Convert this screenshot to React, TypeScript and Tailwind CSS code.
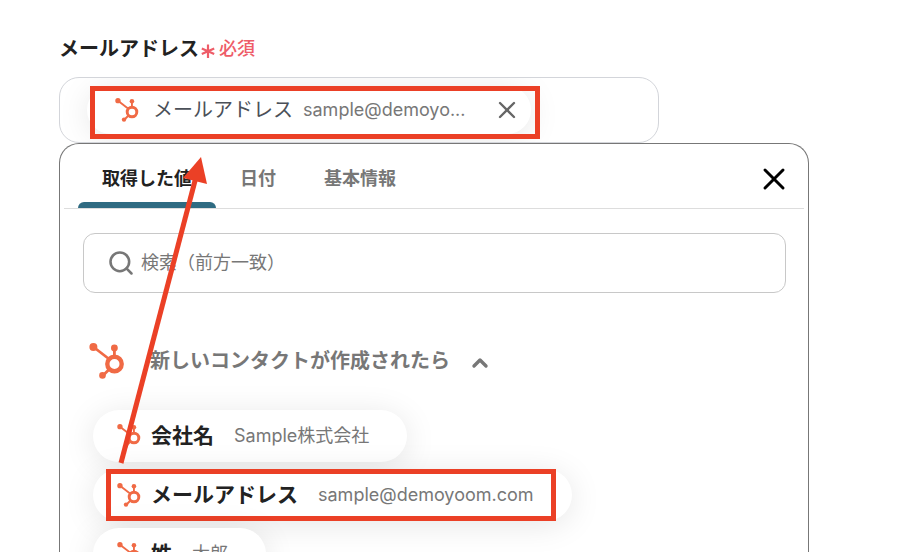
import { useState } from "react";
import { ChevronUp, Search, X } from "lucide-react";

type OutputItem = {
  name: string;
  sample: string;
  highlighted?: boolean;
};

const TABS = ["取得した値", "日付", "基本情報"];

const ITEMS: OutputItem[] = [
  { name: "会社名", sample: "Sample株式会社" },
  { name: "メールアドレス", sample: "sample@demoyoom.com", highlighted: true },
  { name: "姓", sample: "太郎" },
];

function HubSpotIcon({ className }: { className: string }) {
  return (
    <svg viewBox="0 0 36 36" className={className} aria-hidden="true">
      <g stroke="#f06a45" strokeWidth="2.8" fill="none">
        <path d="M4.5 4 20 16" />
        <path d="M25.4 5v10" />
        <path d="M13.5 33 21 25.5" />
        <circle cx="25.5" cy="21" r="7.2" strokeWidth="4.4" />
      </g>
      <g fill="#f06a45">
        <circle cx="4.4" cy="4" r="4" />
        <circle cx="25.4" cy="5" r="3.4" />
        <circle cx="13.5" cy="32.4" r="3.3" />
      </g>
    </svg>
  );
}

function RequiredMark() {
  return (
    <svg viewBox="0 0 14 14" className="mt-1 h-3.5 w-3.5" aria-hidden="true">
      <path
        d="M7 .6v13.4M.8 4.6l12.4 5.4M13.2 4.6.8 10"
        stroke="#ee5c68"
        strokeWidth="2.2"
      />
    </svg>
  );
}

function OutputPill({ item }: { item: OutputItem }) {
  return (
    <li className="relative flex w-fit">
      <button
        type="button"
        className="flex h-13 items-center rounded-full bg-white pr-[38px] pl-6 shadow-[0_4px_32px_rgba(0,0,0,0.1)]"
      >
        <HubSpotIcon className="mr-2.5 h-6 w-6" />
        <span className="mr-5 text-[21px] font-bold text-[#222]">
          {item.name}
        </span>
        <span className="text-lg text-[#777]">{item.sample}</span>
      </button>
      {item.highlighted && (
        <span className="absolute inset-y-0 right-4 left-[13px] border-5 border-[#eb4026]" />
      )}
    </li>
  );
}

export default function App() {
  const [activeTab, setActiveTab] = useState(TABS[0]);
  const [keyword, setKeyword] = useState("");

  return (
    <main className="relative flex h-screen flex-col overflow-hidden bg-white pr-[99px] pl-[59px] font-['Inter','Noto_Sans_CJK_JP',sans-serif]">
      <div className="flex h-[77px] shrink-0 items-center pt-5">
        <label htmlFor="mail-output" className="text-xl font-bold text-[#222]">
          メールアドレス
        </label>
        <span className="ml-0.5 flex items-center gap-1 text-lg font-medium text-[#ee5c68]">
          <RequiredMark />
          必須
        </span>
      </div>

      <div className="relative mr-[150px] flex h-[66px] shrink-0">
        <div className="flex flex-1 items-center overflow-hidden rounded-[20px] border border-[#d3d5da] pl-[27px]">
          <div className="flex h-12 items-center rounded-full bg-white pr-2.5 pl-7 shadow-[0_4px_32px_rgba(0,0,0,0.1)]">
            <HubSpotIcon className="mr-3.5 h-6 w-6" />
            <span className="mr-2.5 text-xl text-[#4b5058]">
              メールアドレス
            </span>
            <span className="mr-7 text-lg text-[#777]">sample@demoyo...</span>
            <button type="button" aria-label="削除" className="text-[#666]">
              <X className="h-7 w-7" strokeWidth={2} />
            </button>
          </div>
          <input
            id="mail-output"
            type="text"
            className="h-full min-w-0 flex-1 bg-transparent px-3 text-lg outline-none"
          />
        </div>
        <span className="pointer-events-none absolute top-[9px] left-[31px] h-[53px] w-[450px] border-5 border-[#eb4026]" />
      </div>

      <section className="flex-1 rounded-t-[20px] border border-b-0 border-[#777] bg-white">
        <div className="mx-1 flex h-[65px] items-center border-b border-[#ddd] pt-1.5 pl-3.5">
          <div role="tablist" className="flex h-full">
            {TABS.map((tab) => (
              <button
                key={tab}
                type="button"
                role="tab"
                aria-selected={tab === activeTab}
                onClick={() => setActiveTab(tab)}
                className={`relative px-6 text-lg font-bold ${
                  tab === activeTab ? "text-[#222]" : "text-[#777]"
                }`}
              >
                {tab}
                {tab === activeTab && (
                  <span className="absolute inset-x-0 bottom-0 h-1.5 rounded-t-md bg-[#2f6b82]" />
                )}
              </button>
            ))}
          </div>
          <button type="button" aria-label="閉じる" className="mr-3 ml-auto">
            <X className="h-9 w-9 text-black" strokeWidth={2} />
          </button>
        </div>

        <label className="mr-[22px] ml-[23px] mt-6 flex h-15 items-center rounded-xl border border-[#c8c8c8] pl-[23px]">
          <Search className="mr-1.5 h-7 w-7 text-[#777]" strokeWidth={2.2} />
          <input
            type="search"
            aria-label="検索"
            value={keyword}
            onChange={(e) => setKeyword(e.target.value)}
            placeholder="検索（前方一致）"
            className="flex-1 text-lg text-[#222] outline-none placeholder:text-[#777]"
          />
        </label>

        <button
          type="button"
          className="mt-[50px] ml-[29px] flex h-9 items-center text-xl font-bold text-[#777]"
        >
          <HubSpotIcon className="mr-[25px] h-9 w-9" />
          新しいコンタクトが作成されたら
          <ChevronUp className="mt-1 ml-[18px] h-6 w-6" strokeWidth={3.4} />
        </button>

        <ul className="mt-[31px] ml-[33px] flex flex-col gap-[7px]">
          {ITEMS.map((item) => (
            <OutputPill key={item.name} item={item} />
          ))}
        </ul>
      </section>

      {/* Arrow from the picked pill up to the field */}
      <svg
        viewBox="0 0 100 310"
        className="pointer-events-none absolute top-[155px] left-[110px] h-[310px] w-[100px]"
        aria-hidden="true"
      >
        <path d="M11 308 86 22" stroke="#eb4026" strokeWidth="5" />
        <path d="M91 2 97 29 73 23Z" fill="#eb4026" />
      </svg>
    </main>
  );
}
